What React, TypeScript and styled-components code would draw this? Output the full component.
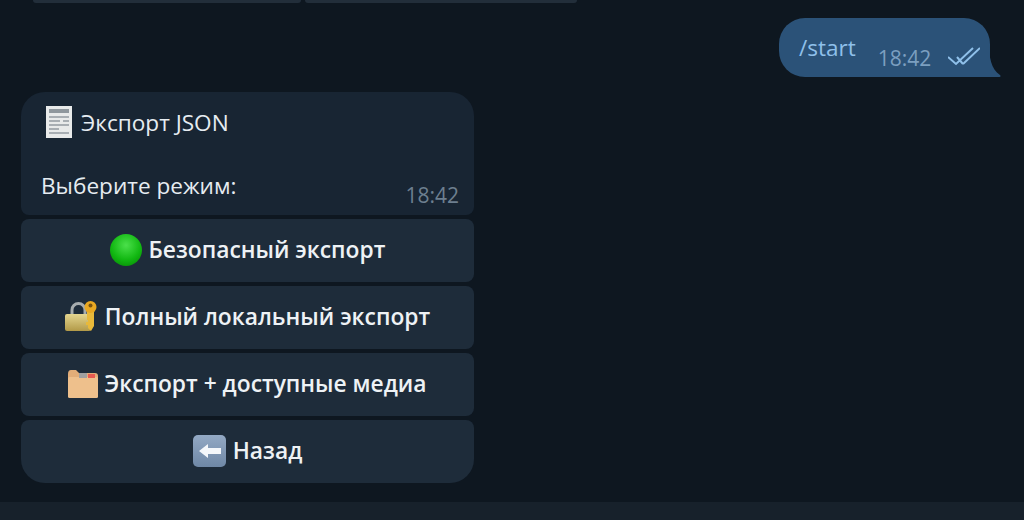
import React from "react";
import styled, { createGlobalStyle } from "styled-components";

const Global = createGlobalStyle`
  html, body { margin: 0; padding: 0; background: #0e1621; }
  #root { width: 1024px; height: 520px; overflow: hidden; }
`;

const Page = styled.div`
  width: 1024px;
  height: 520px;
  display: flex;
  flex-direction: column;
  background: #0e1720;
  font-family: "Open Sans", "Noto Sans", sans-serif;
  color: #e9eef3;
`;
const Feed = styled.div`
  flex: 1;
  display: flex;
  flex-direction: column;
  min-height: 0;
`;
const TopButtons = styled.div`
  display: flex;
  gap: 4px;
  height: 3px;
  padding-left: 33px;
`;
const TopButton = styled.div<{ $w: number }>`
  width: ${(p) => p.$w}px;
  height: 3px;
  background: #222e3a;
  border-radius: 0 0 6px 6px;
`;
const OutRow = styled.div`
  display: flex;
  justify-content: flex-end;
  padding: 15px 34px 0 0;
`;
const OutBubble = styled.div`
  position: relative;
  width: 211px;
  height: 59px;
  box-sizing: border-box;
  background: #2b5278;
  border-radius: 26px 26px 0 26px;
  display: flex;
  padding: 16px 0 0 20px;
`;
const Tail = styled.svg`
  position: absolute;
  right: -11px;
  bottom: 0;
  width: 12px;
  height: 34px;
`;
const OutText = styled.span`
  font-size: 22.5px;
  line-height: 28px;
  color: #8fc0ea;
`;
const OutTime = styled.span`
  font-size: 21px;
  line-height: 28px;
  margin: 10px 0 0 22px;
  color: #7c9fc0;
`;
const Checks = styled.svg`
  position: absolute;
  left: 169px;
  top: 29px;
  width: 32px;
  height: 19px;
`;
const InBlock = styled.div`
  width: 453px;
  margin: 15px 0 0 21px;
  display: flex;
  flex-direction: column;
  gap: 4px;
`;
const InBubble = styled.div`
  position: relative;
  height: 123px;
  box-sizing: border-box;
  background: #182533;
  border-radius: 24px 24px 8px 8px;
  padding: 13px 20px 0;
  font-size: 22.6px;
  color: #e6ecf1;
`;
const Title = styled.div`
  display: flex;
  align-items: center;
  gap: 9px;
  height: 34px;
  margin-left: 5px;
`;
const Body = styled.div`
  margin-top: 33px;
  line-height: 28px;
`;
const InTime = styled.span`
  position: absolute;
  right: 15px;
  bottom: 6px;
  font-size: 21px;
  line-height: 28px;
  color: #6d7f8f;
`;
const KbButton = styled.div<{ $last?: boolean; $gap?: number }>`
  height: 63px;
  box-sizing: border-box;
  padding-bottom: 2px;
  display: flex;
  align-items: center;
  justify-content: center;
  gap: ${(p) => p.$gap ?? 7}px;
  background: #1e2c3a;
  border-radius: ${(p) => (p.$last ? "8px 8px 24px 24px" : "8px")};
  font-size: 22.8px;
  font-weight: 600;
  color: #eef2f5;
`;
const Composer = styled.div`
  height: 18px;
  background: #17212b;
`;
const Emoji = styled.svg`
  flex: none;
`;

const Receipt = () => (
  <Emoji width="26" height="32" viewBox="0 0 26 32">
    <rect x="0" y="0" width="26" height="32" fill="#e8eaea" />
    <rect x="3" y="3" width="20" height="4" fill="#8f979d" />
    <path d="M3 11h20M3 15h11M17 15h6M3 19h20M3 23h10M3 27h20" stroke="#a8aeb3" strokeWidth="2" />
  </Emoji>
);
const GreenDot = () => (
  <Emoji width="32" height="32" viewBox="0 0 32 32">
    <defs>
      <radialGradient id="g" cx="50%" cy="35%" r="65%">
        <stop offset="0%" stopColor="#4be04b" />
        <stop offset="70%" stopColor="#12b812" />
        <stop offset="100%" stopColor="#0a9a0a" />
      </radialGradient>
    </defs>
    <circle cx="16" cy="16" r="16" fill="url(#g)" />
  </Emoji>
);
const LockKey = () => (
  <Emoji width="33" height="31" viewBox="0 0 33 31">
    <defs>
      <linearGradient id="l" x1="0" y1="0" x2="0" y2="1">
        <stop offset="0%" stopColor="#e4d58f" />
        <stop offset="100%" stopColor="#b29a48" />
      </linearGradient>
    </defs>
    <path d="M7 14V9a6.500 6.500 0 0 1 13 0v5" fill="none" stroke="#a6acae" strokeWidth="3" />
    <rect x="0" y="13" width="26" height="17" rx="2" fill="url(#l)" />
    <path d="M22 6h7v19l-3 5-3-3v-3h-2v-3h2v-2h-1z" fill="#e8b93a" />
    <circle cx="25.500" cy="6" r="6" fill="#e9a822" />
    <circle cx="25.500" cy="4.500" r="2" fill="#7a5310" />
  </Emoji>
);
const Box = () => (
  <Emoji width="30" height="30" viewBox="0 0 30 30">
    <path d="M0 5q0-4 3-4h5l3 3h16q3 0 3 3v3H0z" fill="#e2ad78" />
    <rect x="0" y="8" width="30" height="21" rx="1.500" fill="#eec08c" />
    <rect x="11" y="4" width="8" height="5" fill="#a0a0a0" />
    <rect x="20" y="5" width="7" height="4" fill="#e85a50" />
  </Emoji>
);
const BackArrow = () => (
  <Emoji width="33" height="32" viewBox="0 0 33 32">
    <defs>
      <linearGradient id="b" x1="0" y1="0" x2="0" y2="1">
        <stop offset="0%" stopColor="#93a9c4" />
        <stop offset="100%" stopColor="#6f88a6" />
      </linearGradient>
    </defs>
    <rect x="0" y="0" width="33" height="32" rx="5" fill="url(#b)" />
    <path d="M6 16 15 9v4h13v6H15v4z" fill="#f4f7fa" />
  </Emoji>
);

export default function App() {
  return (
    <Page>
      <Global />
      <Feed>
        <TopButtons>
          <TopButton $w={268} />
          <TopButton $w={272} />
        </TopButtons>
        <OutRow>
          <OutBubble>
            <OutText>/start</OutText>
            <OutTime>18:42</OutTime>
            <Checks viewBox="0 0 32 19">
              <path d="M0 10l8 7L25 1M15 17 32 1M9 10l6 7" fill="none" stroke="#8fc0ea" strokeWidth="2" />
            </Checks>
            <Tail viewBox="0 0 12 34">
              <path d="M0 0c0 14 2 26 11 32 1 1 .5 2-.5 2H0z" fill="#2b5278" />
            </Tail>
          </OutBubble>
        </OutRow>
        <InBlock>
          <InBubble>
            <Title>
              <Receipt />
              <span>Экспорт JSON</span>
            </Title>
            <Body>Выберите режим:</Body>
            <InTime>18:42</InTime>
          </InBubble>
          <KbButton><GreenDot />Безопасный экспорт</KbButton>
          <KbButton><LockKey />Полный локальный экспорт</KbButton>
          <KbButton $gap={6}><Box />Экспорт + доступные медиа</KbButton>
          <KbButton $last><BackArrow />Назад</KbButton>
        </InBlock>
      </Feed>
      <Composer />
    </Page>
  );
}
